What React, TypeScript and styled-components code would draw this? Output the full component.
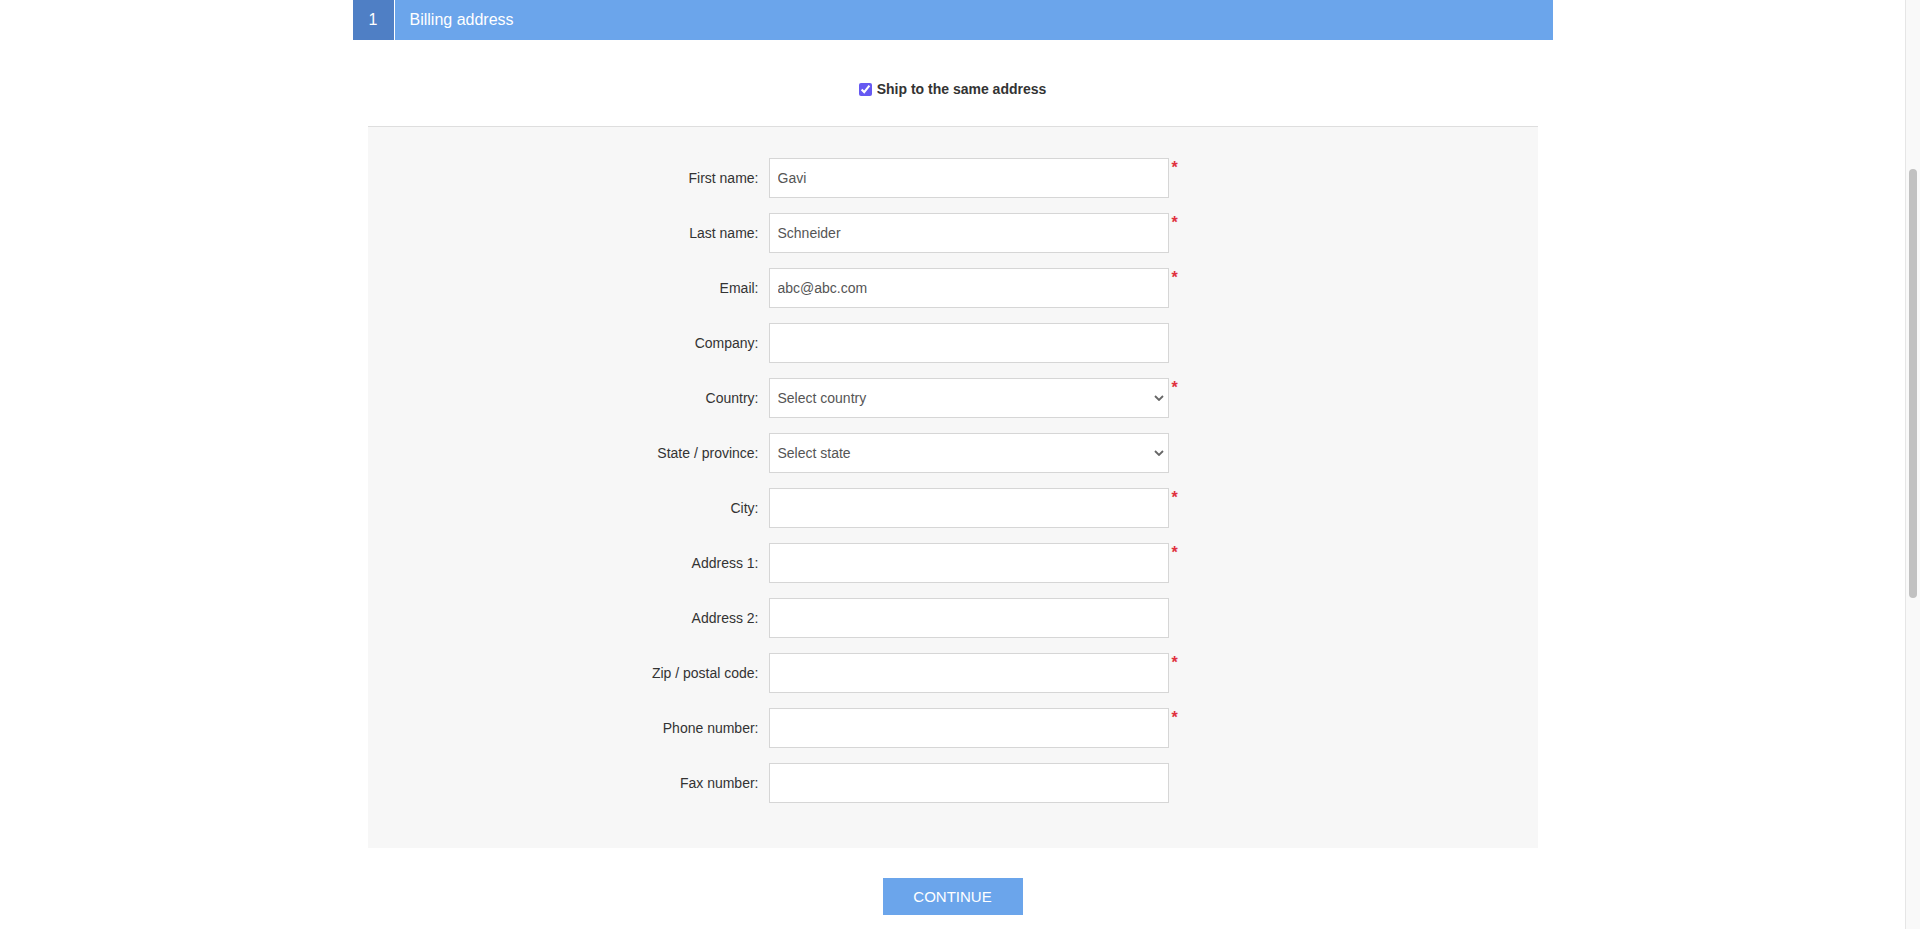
import React, { useLayoutEffect } from 'react';
import styled, { createGlobalStyle } from 'styled-components';

const GlobalStyle = createGlobalStyle`
  body {
    margin: 0;
    padding-right: 15px;
    background: #fff;
    font-family: "Liberation Sans", Arial, Helvetica, sans-serif;
    color: #333;
  }
`;

// stands in for the browser's scrollbar seen in the screenshot
const ScrollTrack = styled.div`
  position: fixed;
  top: 0;
  right: 0;
  bottom: 0;
  width: 14px;
  background: #f9f9f9;
  border-left: 1px solid #e6e6e6;
`;

const ScrollThumb = styled.div`
  position: absolute;
  top: 169px;
  left: 3px;
  width: 8px;
  height: 429px;
  border-radius: 4px;
  background: #c1c1c1;
`;

const Page = styled.div`
  width: 1200px;
  margin: 0 auto;
  padding-bottom: 728px;
`;

const TopSpace = styled.div`
  height: 368px;
`;

const StepHeader = styled.div`
  display: flex;
  height: 40px;
  background: #6ba5eb;
  color: #fff;
  font-size: 16px;
`;

const StepNumber = styled.div`
  width: 41px;
  display: flex;
  align-items: center;
  justify-content: center;
  background: #4f7fc5;
  border-right: 1px solid #fff;
`;

const StepTitle = styled.div`
  display: flex;
  align-items: center;
  padding-left: 15px;
`;

const SameAddress = styled.label`
  display: flex;
  align-items: center;
  justify-content: center;
  padding: 41px 0 29px;
  line-height: 16px;
  font-size: 14px;
  font-weight: bold;
  color: #333;
  cursor: pointer;

  input {
    width: 13px;
    height: 13px;
    margin: 0 5px 0 0;
    accent-color: #6659f2;
  }
`;

const Panel = styled.div`
  margin: 0 15px;
  border-top: 1px solid #dedede;
  background: #f7f7f7;
  padding: 31px 0 45px;
  display: flex;
  flex-direction: column;
  gap: 15px;
`;

const Row = styled.div`
  display: flex;
  align-items: center;
`;

const Label = styled.label`
  width: 391px;
  margin-right: 10px;
  text-align: right;
  font-size: 14px;
  color: #333;
`;

const TextInput = styled.input`
  box-sizing: border-box;
  width: 400px;
  height: 40px;
  padding: 0 8px;
  border: 1px solid #d6d6d6;
  background: #fff;
  font-family: inherit;
  font-size: 14px;
  color: #555;
  outline: none;
`;

const SelectWrap = styled.div`
  position: relative;
  width: 400px;
  height: 40px;

  svg {
    position: absolute;
    right: 5px;
    top: 17px;
    pointer-events: none;
  }
`;

const Select = styled.select`
  box-sizing: border-box;
  width: 100%;
  height: 100%;
  padding: 0 8px;
  border: 1px solid #d6d6d6;
  border-radius: 0;
  background: #fff;
  appearance: none;
  font-family: inherit;
  font-size: 14px;
  color: #555;
  outline: none;
`;

const Required = styled.span<{ $show: boolean }>`
  align-self: flex-start;
  margin: 2px 0 0 3px;
  font-size: 16px;
  line-height: 16px;
  font-weight: bold;
  color: #e0313f;
  visibility: ${(p) => (p.$show ? 'visible' : 'hidden')};
`;

const Actions = styled.div`
  display: flex;
  justify-content: center;
  padding-top: 30px;
`;

const ContinueButton = styled.button`
  width: 140px;
  height: 37px;
  border: none;
  background: #6ba5eb;
  color: #fff;
  font-family: inherit;
  font-size: 15px;
  cursor: pointer;
`;

type Field = {
  label: string;
  value?: string;
  required?: boolean;
  select?: string;
};

const fields: Field[] = [
  { label: 'First name:', value: 'Gavi', required: true },
  { label: 'Last name:', value: 'Schneider', required: true },
  { label: 'Email:', value: 'abc@abc.com', required: true },
  { label: 'Company:' },
  { label: 'Country:', select: 'Select country', required: true },
  { label: 'State / province:', select: 'Select state' },
  { label: 'City:', required: true },
  { label: 'Address 1:', required: true },
  { label: 'Address 2:' },
  { label: 'Zip / postal code:', required: true },
  { label: 'Phone number:', required: true },
  { label: 'Fax number:' },
];

const Chevron = () => (
  <svg width="10" height="6" viewBox="0 0 10 6">
    <path d="M1 1l4 4 4-4" fill="none" stroke="#666" strokeWidth="1.8" />
  </svg>
);

function App() {
  useLayoutEffect(() => {
    window.scrollTo(0, 368);
  }, []);

  return (
    <>
      <GlobalStyle />
      <Page>
        <TopSpace />
        <StepHeader>
          <StepNumber>1</StepNumber>
          <StepTitle>Billing address</StepTitle>
        </StepHeader>
        <SameAddress>
          <input type="checkbox" defaultChecked />
          Ship to the same address
        </SameAddress>
        <Panel>
          {fields.map((f) => (
            <Row key={f.label}>
              <Label>{f.label}</Label>
              {f.select ? (
                <SelectWrap>
                  <Select defaultValue="">
                    <option value="">{f.select}</option>
                  </Select>
                  <Chevron />
                </SelectWrap>
              ) : (
                <TextInput type="text" defaultValue={f.value ?? ''} />
              )}
              <Required $show={!!f.required}>*</Required>
            </Row>
          ))}
        </Panel>
        <Actions>
          <ContinueButton>CONTINUE</ContinueButton>
        </Actions>
      </Page>
      <ScrollTrack>
        <ScrollThumb />
      </ScrollTrack>
    </>
  );
}

export default App;
